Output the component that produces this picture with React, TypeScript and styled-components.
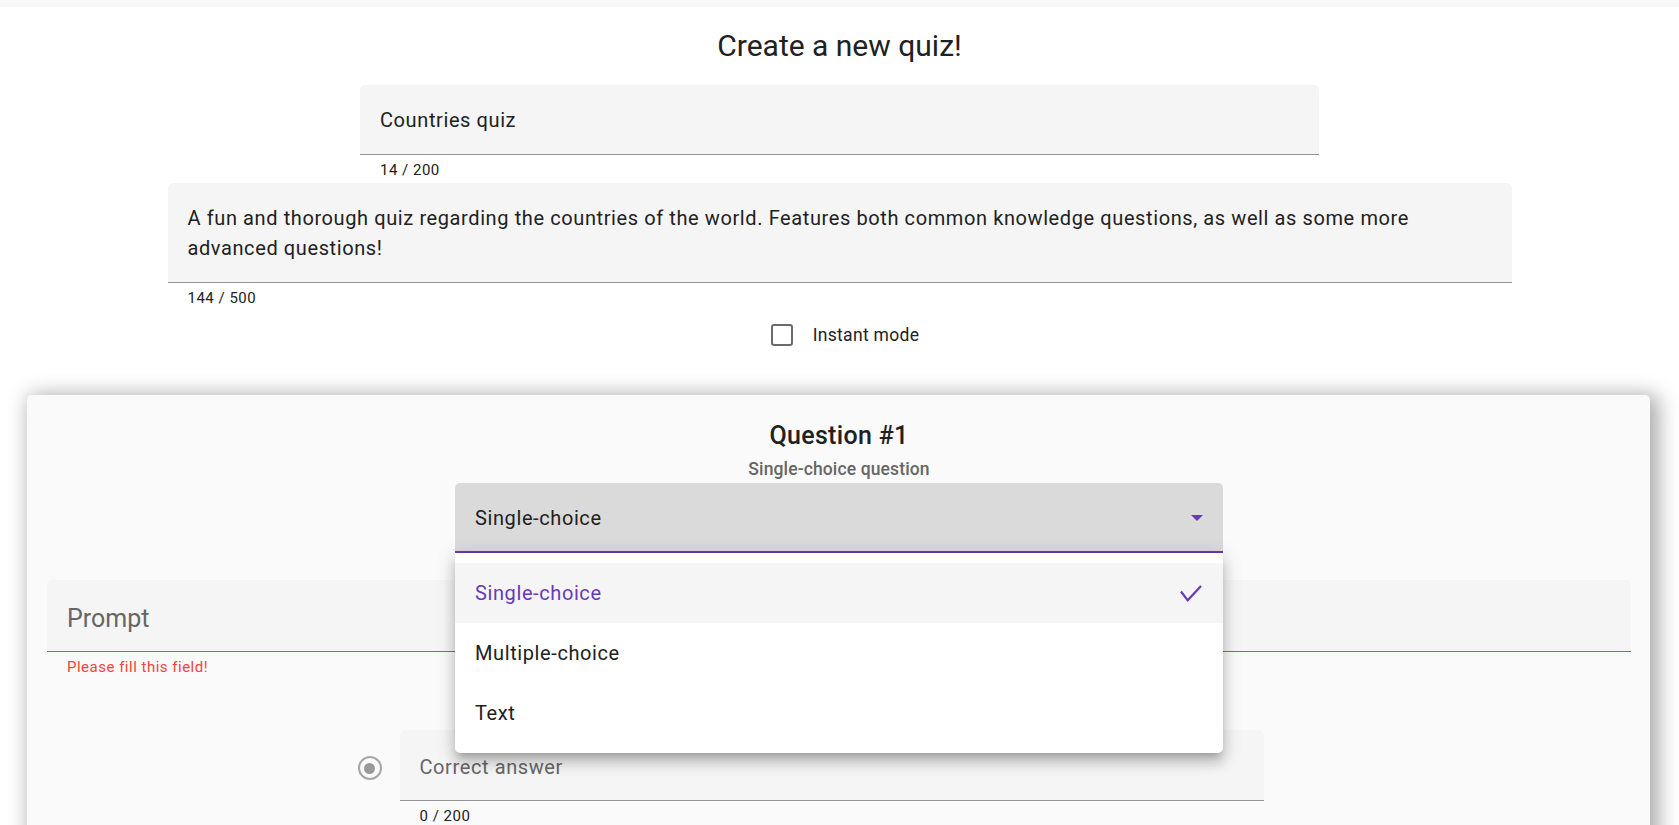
import React from "react";
import styled, { createGlobalStyle } from "styled-components";

const PURPLE = "#673ab7";
const ERROR = "#f44336";

const GlobalStyle = createGlobalStyle`
  html, body {
    margin: 0;
    padding: 0;
    background: #ffffff;
    overflow: hidden;
  }
  body {
    font-family: Roboto, "Liberation Sans", sans-serif;
    color: #212121;
  }
  * {
    box-sizing: border-box;
  }
`;

const TopStrip = styled.div`
  height: 7px;
  background: #f8f8f8;
`;

const Page = styled.main`
  display: flex;
  flex-direction: column;
  align-items: center;
`;

const Title = styled.h1`
  margin: 19px 0 19px;
  font-size: 30px;
  line-height: 40px;
  font-weight: 400;
  color: #212121;
`;

const FieldGroup = styled.div<{ $width?: string; $mt?: number }>`
  display: flex;
  flex-direction: column;
  width: ${(p) => p.$width || "100%"};
  margin-top: ${(p) => p.$mt || 0}px;
`;

const FilledField = styled.div<{ $error?: boolean; $pt?: number; $pb?: number }>`
  background: #f5f5f5;
  border-radius: 5px 5px 0 0;
  border-bottom: 1px solid ${(p) => (p.$error ? ERROR : "#949494")};
  padding: ${(p) => p.$pt ?? 20}px 20px ${(p) => p.$pb ?? 19}px;
  font-size: 20px;
  line-height: 30px;
  letter-spacing: 0.03em;
  color: #212121;
`;

const Placeholder = styled.span<{ $big?: boolean }>`
  color: #666666;
  font-size: ${(p) => (p.$big ? 25 : 20)}px;
  letter-spacing: ${(p) => (p.$big ? "0" : "0.03em")};
`;

const Helper = styled.div<{ $error?: boolean }>`
  padding: 5px 20px 0;
  font-size: 15px;
  line-height: 20px;
  letter-spacing: 0.0333em;
  color: ${(p) => (p.$error ? ERROR : "#212121")};
`;

const CheckRow = styled.label`
  display: flex;
  align-items: center;
  height: 53px;
  padding-left: 11px;
  gap: 20px;
  font-size: 17.5px;
  letter-spacing: 0.0179em;
  color: #212121;
`;

const CheckBox = styled.span`
  width: 22px;
  height: 22px;
  border: 2.5px solid #6b6b6b;
  border-radius: 3px;
`;

const Card = styled.section`
  align-self: stretch;
  margin: 34px 29px 0 27px;
  padding: 21px 19px 40px 20px;
  background: #fafafa;
  border-radius: 5px;
  box-shadow: 5px 3px 20px 4px rgba(0, 0, 0, 0.32);
  display: flex;
  flex-direction: column;
  align-items: center;
`;

const QuestionTitle = styled.h2`
  margin: 0;
  font-size: 25px;
  line-height: 40px;
  font-weight: 500;
  letter-spacing: 0.0125em;
  color: #212121;
`;

const QuestionKind = styled.div`
  font-size: 17.5px;
  line-height: 27px;
  font-weight: 500;
  letter-spacing: 0.007em;
  color: #666666;
`;

const SelectWrap = styled.div`
  position: relative;
  width: 768px;
`;

const SelectBox = styled.div`
  display: flex;
  align-items: center;
  justify-content: space-between;
  height: 70px;
  padding: 2px 20px 0;
  background: #dadada;
  border-radius: 5px 5px 0 0;
  border-bottom: 2px solid ${PURPLE};
  font-size: 20px;
  letter-spacing: 0.03em;
  color: #212121;
`;

const Arrow = styled.span`
  width: 0;
  height: 0;
  border-left: 6px solid transparent;
  border-right: 6px solid transparent;
  border-top: 6px solid ${PURPLE};
`;

const Menu = styled.ul`
  position: absolute;
  top: 100%;
  left: 0;
  right: 0;
  z-index: 10;
  margin: 0;
  padding: 10px 0;
  list-style: none;
  background: #ffffff;
  border-radius: 0 0 5px 5px;
  box-shadow: 0 6px 6px -4px rgba(0, 0, 0, 0.2), 0 10px 12px 1px rgba(0, 0, 0, 0.14),
    0 4px 18px 3px rgba(0, 0, 0, 0.12);
`;

const MenuItem = styled.li<{ $selected?: boolean }>`
  display: flex;
  align-items: center;
  justify-content: space-between;
  height: 60px;
  padding: 0 21px 0 20px;
  font-size: 20px;
  letter-spacing: 0.03em;
  color: ${(p) => (p.$selected ? PURPLE : "#212121")};
  background: ${(p) => (p.$selected ? "#f5f5f5" : "transparent")};
`;

const AnswerRow = styled.div`
  display: flex;
  align-items: flex-start;
  margin-top: 53px;
`;

const RadioSlot = styled.div`
  width: 50px;
  height: 71px;
  display: flex;
  align-items: center;
  justify-content: center;
  padding-top: 5px;
  margin-right: 5px;
`;

const Radio = styled.span`
  width: 24px;
  height: 24px;
  border-radius: 50%;
  border: 2.5px solid #a6a6a6;
  display: flex;
  align-items: center;
  justify-content: center;
  &::after {
    content: "";
    width: 11px;
    height: 11px;
    border-radius: 50%;
    background: #9a9a9a;
  }
`;

const Spacer = styled.div`
  width: 70px;
`;

const CheckIcon = () => (
  <svg width="22" height="17" viewBox="0 0 22 17" fill="none">
    <path d="M1 6.5 L7.7 15.3 L21 1" stroke={PURPLE} strokeWidth="2.2" />
  </svg>
);

const kinds = ["Single-choice", "Multiple-choice", "Text"];

export default function App() {
  return (
    <>
      <GlobalStyle />
      <TopStrip />
      <Page>
        <Title>Create a new quiz!</Title>
        <FieldGroup $width="959px">
          <FilledField>Countries quiz</FilledField>
          <Helper>14 / 200</Helper>
        </FieldGroup>
        <FieldGroup $width="1344px" $mt={3}>
          <FilledField>
            A fun and thorough quiz regarding the countries of the world. Features both common
            knowledge questions, as well as some more advanced questions!
          </FilledField>
          <Helper>144 / 500</Helper>
        </FieldGroup>
        <CheckRow>
          <CheckBox />
          Instant mode
        </CheckRow>
        <Card>
          <QuestionTitle>Question #1</QuestionTitle>
          <QuestionKind>Single-choice question</QuestionKind>
          <SelectWrap>
            <SelectBox>
              Single-choice
              <Arrow />
            </SelectBox>
            <Menu>
              {kinds.map((k, i) => (
                <MenuItem key={k} $selected={i === 0}>
                  {k}
                  {i === 0 && <CheckIcon />}
                </MenuItem>
              ))}
            </Menu>
          </SelectWrap>
          <FieldGroup $mt={27}>
            <FilledField $error $pt={24} $pb={16}>
              <Placeholder $big>Prompt</Placeholder>
            </FilledField>
            <Helper $error>Please fill this field!</Helper>
          </FieldGroup>
          <AnswerRow>
            <RadioSlot>
              <Radio />
            </RadioSlot>
            <FieldGroup $width="864px">
              <FilledField $pt={22} $pb={18}>
                <Placeholder>Correct answer</Placeholder>
              </FilledField>
              <Helper>0 / 200</Helper>
            </FieldGroup>
            <Spacer />
          </AnswerRow>
        </Card>
      </Page>
    </>
  );
}
